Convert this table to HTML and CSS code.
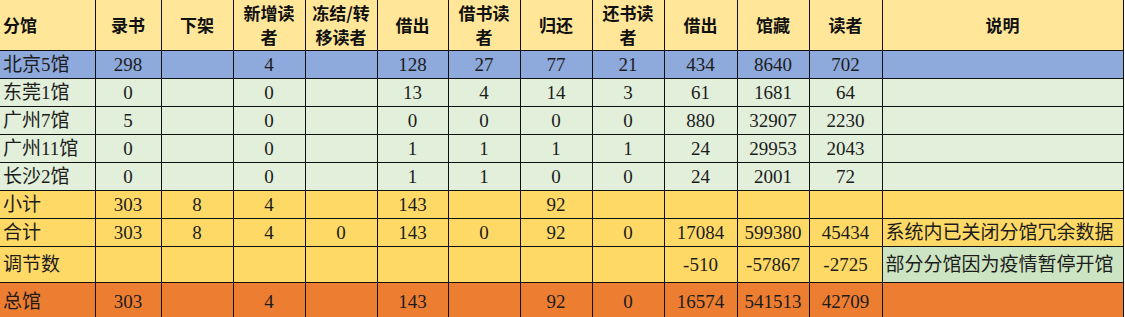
FILE: index.html
```html
<!DOCTYPE html>
<html lang="zh-CN">
<head>
<meta charset="utf-8">
<title>分馆统计</title>
<link rel="stylesheet" href="styles.css">
</head>
<body>
<table class="sheet">
  <colgroup>
    <col class="c-name"><col class="c-narrow"><col class="c-std"><col class="c-std"><col class="c-std">
    <col class="c-std2"><col class="c-std"><col class="c-std"><col class="c-std"><col class="c-std3">
    <col class="c-std"><col class="c-std3"><col class="c-note">
  </colgroup>
  <thead>
    <tr class="head">
      <th class="left">分馆</th><th>录书</th><th>下架</th><th>新增读<br>者</th><th>冻结/转<br>移读者</th>
      <th>借出</th><th>借书读<br>者</th><th>归还</th><th>还书读<br>者</th><th>借出</th><th>馆藏</th><th>读者</th><th>说明</th>
    </tr>
  </thead>
  <tbody>
    <tr class="blue"><td class="left">北京5馆</td><td>298</td><td></td><td>4</td><td></td><td>128</td><td>27</td><td>77</td><td>21</td><td>434</td><td>8640</td><td>702</td><td></td></tr>
    <tr class="green"><td class="left">东莞1馆</td><td>0</td><td></td><td>0</td><td></td><td>13</td><td>4</td><td>14</td><td>3</td><td>61</td><td>1681</td><td>64</td><td></td></tr>
    <tr class="green"><td class="left">广州7馆</td><td>5</td><td></td><td>0</td><td></td><td>0</td><td>0</td><td>0</td><td>0</td><td>880</td><td>32907</td><td>2230</td><td></td></tr>
    <tr class="green"><td class="left">广州11馆</td><td>0</td><td></td><td>0</td><td></td><td>1</td><td>1</td><td>1</td><td>1</td><td>24</td><td>29953</td><td>2043</td><td></td></tr>
    <tr class="green"><td class="left">长沙2馆</td><td>0</td><td></td><td>0</td><td></td><td>1</td><td>1</td><td>0</td><td>0</td><td>24</td><td>2001</td><td>72</td><td></td></tr>
    <tr class="yellow"><td class="left">小计</td><td>303</td><td>8</td><td>4</td><td></td><td>143</td><td></td><td>92</td><td></td><td></td><td></td><td></td><td></td></tr>
    <tr class="yellow"><td class="left">合计</td><td>303</td><td>8</td><td>4</td><td>0</td><td>143</td><td>0</td><td>92</td><td>0</td><td>17084</td><td>599380</td><td>45434</td><td class="left">系统内已关闭分馆冗余数据</td></tr>
    <tr class="yellow tall"><td class="left">调节数</td><td></td><td></td><td></td><td></td><td></td><td></td><td></td><td></td><td>-510</td><td>-57867</td><td>-2725</td><td class="left note-green">部分分馆因为疫情暂停开馆</td></tr>
    <tr class="orange taller"><td class="left">总馆</td><td>303</td><td></td><td>4</td><td></td><td>143</td><td></td><td>92</td><td>0</td><td>16574</td><td>541513</td><td>42709</td><td></td></tr>
  </tbody>
</table>
</body>
</html>
```
FILE: styles.css
```css
html, body {
  margin: 0;
  padding: 0;
  background: #ffffff;
}

.sheet {
  border-collapse: collapse;
  table-layout: fixed;
  width: 1123px;
  font-family: "Liberation Serif", "Noto Sans CJK SC", serif;
  font-size: 19px;
  color: #1c1c1c;
}

.c-name { width: 95px; }
.c-narrow { width: 66px; }
.c-std { width: 72px; }
.c-std2 { width: 71px; }
.c-std3 { width: 73px; }
.c-note { width: 241px; }

.sheet th,
.sheet td {
  border: 1px solid #111;
  padding: 0 2px;
  text-align: center;
  vertical-align: middle;
  white-space: nowrap;
  overflow: hidden;
}

.sheet tr > :first-child { border-left: none; }
.sheet thead th { border-top: none; }

.sheet .left {
  text-align: left;
  padding-left: 3px;
}

.head th {
  height: 50px;
  background: #ffe699;
  font-family: "Noto Sans CJK SC", "Noto Sans", sans-serif;
  font-weight: bold;
  font-size: 17px;
  line-height: 24px;
  color: #111;
}

.sheet tbody tr { height: 28px; }
.sheet tbody td { line-height: 22px; }

.blue td { background: #8ea9db; }
.green td { background: #e2efda; }
.yellow td { background: #ffd966; }
.orange td { background: #ed7d31; }

.sheet tbody tr.tall { height: 36px; }
.sheet tbody tr.taller { height: 38px; }

.yellow td.note-green { background: #cde4c2; }
```
